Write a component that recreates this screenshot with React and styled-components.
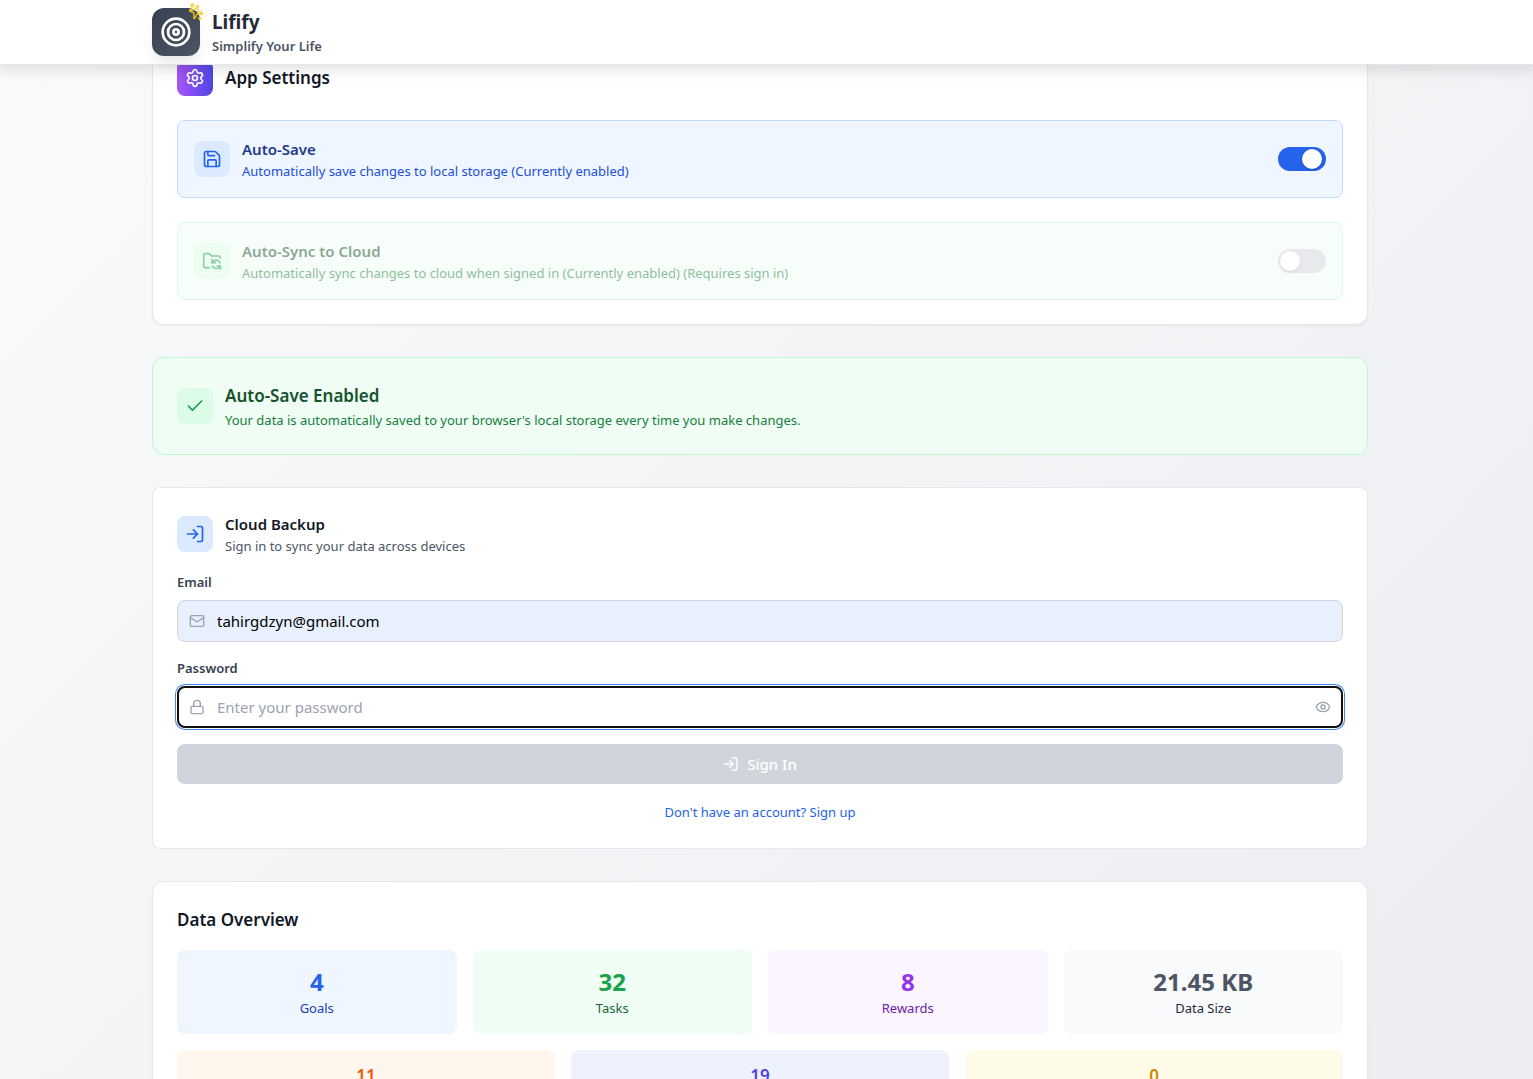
import React from 'react';
import styled, { createGlobalStyle } from 'styled-components';
import { Check, Eye, FolderSync, Lock, LogIn, Mail, Save, Settings, Sparkles, Target } from 'lucide-react';

const totals = [
  { label: 'Goals', value: '4', bg: '#eff6ff', color: '#2563eb', text: '#1e40af' },
  { label: 'Tasks', value: '32', bg: '#f0fdf4', color: '#16a34a', text: '#166534' },
  { label: 'Rewards', value: '8', bg: '#faf5ff', color: '#9333ea', text: '#6b21a8' },
  { label: 'Data Size', value: '21.45 KB', bg: '#f9fafb', color: '#4b5563', text: '#1f2937' },
];

const details = [
  { value: '11', bg: '#fff7ed', color: '#ea580c' },
  { value: '19', bg: '#eef2ff', color: '#4f46e5' },
  { value: '0', bg: '#fefce8', color: '#ca8a04' },
];

const App = () => {
  const [autoSave, setAutoSave] = React.useState(true);
  const [email, setEmail] = React.useState('tahirgdzyn@gmail.com');
  const [password, setPassword] = React.useState('');
  const [showPassword, setShowPassword] = React.useState(false);

  return (
    <Page>
      <GlobalStyle />
      <Header>
        <Brand>
          <Logo>
            <Target size={32} />
            <Spark>
              <Sparkles size={16} />
            </Spark>
          </Logo>
          <div>
            <BrandName>Lifify</BrandName>
            <Tagline>Simplify Your Life</Tagline>
          </div>
        </Brand>
      </Header>

      <Main>
        <Card>
          <CardHead>
            <IconBox $bg="linear-gradient(90deg, #a855f7, #4f46e5)" $color="#fff">
              <Settings size={20} />
            </IconBox>
            <Heading>App Settings</Heading>
          </CardHead>
          <SettingList>
            <Setting $bg="#eff6ff" $border="#bfdbfe">
              <IconBox $bg="#dbeafe" $color="#2563eb">
                <Save size={20} />
              </IconBox>
              <SettingText>
                <SubHeading $color="#1e3a8a">Auto-Save</SubHeading>
                <Note $color="#1d4ed8">
                  Automatically save changes to local storage (Currently {autoSave ? 'enabled' : 'disabled'})
                </Note>
              </SettingText>
              <Toggle
                type="checkbox"
                aria-label="Auto-Save"
                checked={autoSave}
                onChange={(e) => setAutoSave(e.target.checked)}
              />
            </Setting>
            <Setting $bg="#f0fdf4" $border="#bbf7d0" $faded>
              <IconBox $bg="#dcfce7" $color="#16a34a">
                <FolderSync size={20} />
              </IconBox>
              <SettingText>
                <SubHeading $color="#14532d">Auto-Sync to Cloud</SubHeading>
                <Note $color="#15803d">
                  Automatically sync changes to cloud when signed in (Currently enabled) (Requires sign in)
                </Note>
              </SettingText>
              <Toggle type="checkbox" aria-label="Auto-Sync to Cloud" disabled />
            </Setting>
          </SettingList>
        </Card>

        <Banner>
          <IconBox $bg="#dcfce7" $color="#16a34a">
            <Check size={20} />
          </IconBox>
          <div>
            <Heading $color="#14532d">Auto-Save Enabled</Heading>
            <Note $color="#15803d">
              Your data is automatically saved to your browser's local storage every time you make changes.
            </Note>
          </div>
        </Banner>

        <LoginCard>
          <LoginHead>
            <IconBox $bg="#dbeafe" $color="#2563eb">
              <LogIn size={20} />
            </IconBox>
            <div>
              <SubHeading $color="#111827">Cloud Backup</SubHeading>
              <Note $color="#4b5563">Sign in to sync your data across devices</Note>
            </div>
          </LoginHead>
          <Form onSubmit={(e) => e.preventDefault()}>
            <div>
              <Label htmlFor="email">Email</Label>
              <Field $filled>
                <Mail size={16} />
                <Input id="email" type="email" value={email} onChange={(e) => setEmail(e.target.value)} />
              </Field>
            </div>
            <div>
              <Label htmlFor="password">Password</Label>
              <Field $active>
                <Lock size={16} />
                <Input
                  id="password"
                  type={showPassword ? 'text' : 'password'}
                  placeholder="Enter your password"
                  value={password}
                  onChange={(e) => setPassword(e.target.value)}
                />
                <EyeBtn type="button" aria-label="Show password" onClick={() => setShowPassword(!showPassword)}>
                  <Eye size={16} />
                </EyeBtn>
              </Field>
            </div>
            <SubmitBtn type="submit" disabled={!password}>
              <LogIn size={16} />
              Sign In
            </SubmitBtn>
          </Form>
          <SignUp>
            <SignUpLink href="#signup">Don't have an account? Sign up</SignUpLink>
          </SignUp>
        </LoginCard>

        <Card>
          <Heading>Data Overview</Heading>
          <StatGrid $columns={4}>
            {totals.map((stat) => (
              <Stat key={stat.label} $bg={stat.bg}>
                <StatValue $color={stat.color}>{stat.value}</StatValue>
                <StatLabel $color={stat.text}>{stat.label}</StatLabel>
              </Stat>
            ))}
          </StatGrid>
          <StatGrid $columns={3}>
            {details.map((stat) => (
              <SmallStat key={stat.value} $bg={stat.bg}>
                <SmallValue $color={stat.color}>{stat.value}</SmallValue>
              </SmallStat>
            ))}
          </StatGrid>
        </Card>
      </Main>
    </Page>
  );
};

const GlobalStyle = createGlobalStyle`
  * {
    box-sizing: border-box;
  }
  body {
    margin: 0;
    font-family: 'Noto Sans', 'Open Sans', sans-serif;
    font-size: 15px;
    line-height: 24px;
    color: #111827;
  }
  h1, h2, h3, p {
    margin: 0;
  }
  input, button {
    font: inherit;
  }
  svg {
    display: block;
    flex-shrink: 0;
  }
`;

const Page = styled.div`
  height: 100vh;
  overflow: hidden;
  background: linear-gradient(135deg, #f9fafb, #f3f4f6 50%, #ecedf1);
`;

const Header = styled.header`
  position: relative;
  z-index: 1;
  padding-right: 13px; // scrollbar
  background: #fff;
  border-bottom: 1px solid #e5e7eb;
  box-shadow: 0 4px 12px 2px rgba(0, 0, 0, 0.1);
`;

const Brand = styled.div`
  display: flex;
  align-items: center;
  gap: 12px;
  max-width: 1280px;
  height: 64px;
  margin: 0 auto;
  padding: 0 32px;
`;

const Logo = styled.div`
  position: relative;
  display: flex;
  align-items: center;
  justify-content: center;
  width: 48px;
  height: 48px;
  border-radius: 12px;
  color: #fff;
  background: linear-gradient(135deg, #374151, #4b5563);
  box-shadow: 0 10px 15px -3px rgba(0, 0, 0, 0.1);
`;

const Spark = styled.span`
  position: absolute;
  top: -4px;
  right: -4px;
  color: #facc15;
  transform: rotate(105deg);
`;

const BrandName = styled.h1`
  font-size: 19px;
  line-height: 28px;
  font-weight: 700;
  color: #1f2937;
`;

const Tagline = styled.p`
  font-size: 13px;
  line-height: 20px;
  font-weight: 600;
  color: #4b5563;
`;

const Main = styled.main`
  display: flex;
  flex-direction: column;
  gap: 32px;
  max-width: 1293px;
  margin: -30px auto 0;
  padding: 0 45px 32px 32px;
`;

const Card = styled.section`
  padding: 24px;
  border: 1px solid #e5e7eb;
  border-radius: 12px;
  background: #fff;
  box-shadow: 0 1px 2px rgba(0, 0, 0, 0.05);
`;

const CardHead = styled.div`
  display: flex;
  align-items: center;
  gap: 12px;
  margin-bottom: 24px;
`;

const IconBox = styled.div`
  display: flex;
  align-items: center;
  justify-content: center;
  flex-shrink: 0;
  width: 36px;
  height: 36px;
  border-radius: 8px;
  color: ${(props) => props.$color};
  background: ${(props) => props.$bg};
`;

const Heading = styled.h2`
  font-size: 17px;
  line-height: 28px;
  font-weight: 600;
  color: ${(props) => props.$color || '#111827'};
`;

const SubHeading = styled.h3`
  font-size: 15px;
  line-height: 24px;
  font-weight: 600;
  color: ${(props) => props.$color};
`;

const Note = styled.p`
  font-size: 13px;
  line-height: 20px;
  color: ${(props) => props.$color};
`;

const SettingList = styled.div`
  display: flex;
  flex-direction: column;
  gap: 24px;
`;

const Setting = styled.div`
  display: flex;
  align-items: center;
  gap: 12px;
  padding: 16px;
  border: 1px solid ${(props) => props.$border};
  border-radius: 8px;
  background: ${(props) => props.$bg};
  opacity: ${(props) => (props.$faded ? 0.5 : 1)};
`;

const SettingText = styled.div`
  flex: 1;
`;

const Toggle = styled.input`
  appearance: none;
  display: flex;
  align-items: center;
  width: 48px;
  height: 24px;
  margin: 0;
  padding: 0 2px;
  border-radius: 12px;
  background: #d1d5db;
  cursor: pointer;

  &::before {
    content: '';
    width: 20px;
    height: 20px;
    border-radius: 50%;
    background: #fff;
    box-shadow: 0 1px 3px rgba(0, 0, 0, 0.2);
  }
  &:checked {
    justify-content: flex-end;
    padding-right: 4px;
    background: #2563eb;
  }
`;

const Banner = styled.section`
  display: flex;
  align-items: center;
  gap: 12px;
  padding: 24px;
  border: 1px solid #bbf7d0;
  border-radius: 12px;
  background: #f0fdf4;
`;

const LoginCard = styled.section`
  padding: 24px;
  border: 1px solid #e5e7eb;
  border-radius: 8px;
  background: #fff;
`;

const LoginHead = styled.div`
  display: flex;
  align-items: center;
  gap: 12px;
  margin-bottom: 16px;
`;

const Form = styled.form`
  display: flex;
  flex-direction: column;
  gap: 16px;
`;

const Label = styled.label`
  display: block;
  margin-bottom: 8px;
  font-size: 13px;
  line-height: 20px;
  font-weight: 600;
  color: #374151;
`;

const Field = styled.div`
  display: flex;
  align-items: center;
  gap: 12px;
  height: 42px;
  padding: 0 11px;
  border: 1px solid #d1d5db;
  border-radius: 8px;
  color: #9ca3af;
  background: ${(props) => (props.$filled ? '#e8f0fe' : '#fff')};
  outline: ${(props) => (props.$active ? '2px solid #101010' : 'none')};
  outline-offset: -2px;
  box-shadow: ${(props) => (props.$active ? '0 0 0 1px #fff, 0 0 0 2px #3b82f6' : 'none')};
`;

const Input = styled.input`
  flex: 1;
  min-width: 0;
  height: 24px;
  padding: 0;
  border: 0;
  outline: 0;
  color: #000;
  background: transparent;

  &::placeholder {
    color: #9ca3af;
  }
`;

const EyeBtn = styled.button`
  padding: 0;
  border: 0;
  color: #9ca3af;
  background: none;
  cursor: pointer;
`;

const SubmitBtn = styled.button`
  display: flex;
  align-items: center;
  justify-content: center;
  gap: 8px;
  padding: 8px 16px;
  border: 0;
  border-radius: 8px;
  font-weight: 500;
  color: #fff;
  background: #2563eb;

  &:disabled {
    background: #d1d5db;
  }
`;

const SignUp = styled.p`
  margin-top: 16px;
  font-size: 13px;
  text-align: center;
`;

const SignUpLink = styled.a`
  color: #2563eb;
  text-decoration: none;
`;

const StatGrid = styled.div`
  display: grid;
  grid-template-columns: repeat(${(props) => props.$columns}, 1fr);
  gap: 16px;
  margin-top: 16px;
`;

const Stat = styled.div`
  padding: 16px;
  border-radius: 8px;
  text-align: center;
  background: ${(props) => props.$bg};
`;

const StatValue = styled.div`
  font-size: 24px;
  line-height: 32px;
  font-weight: 700;
  color: ${(props) => props.$color};
`;

const StatLabel = styled.div`
  font-size: 13px;
  line-height: 20px;
  color: ${(props) => props.$color};
`;

const SmallStat = styled(Stat)`
  padding: 12px;
`;

const SmallValue = styled(StatValue)`
  font-size: 17px;
  line-height: 28px;
  font-weight: 600;
`;

export default App;
